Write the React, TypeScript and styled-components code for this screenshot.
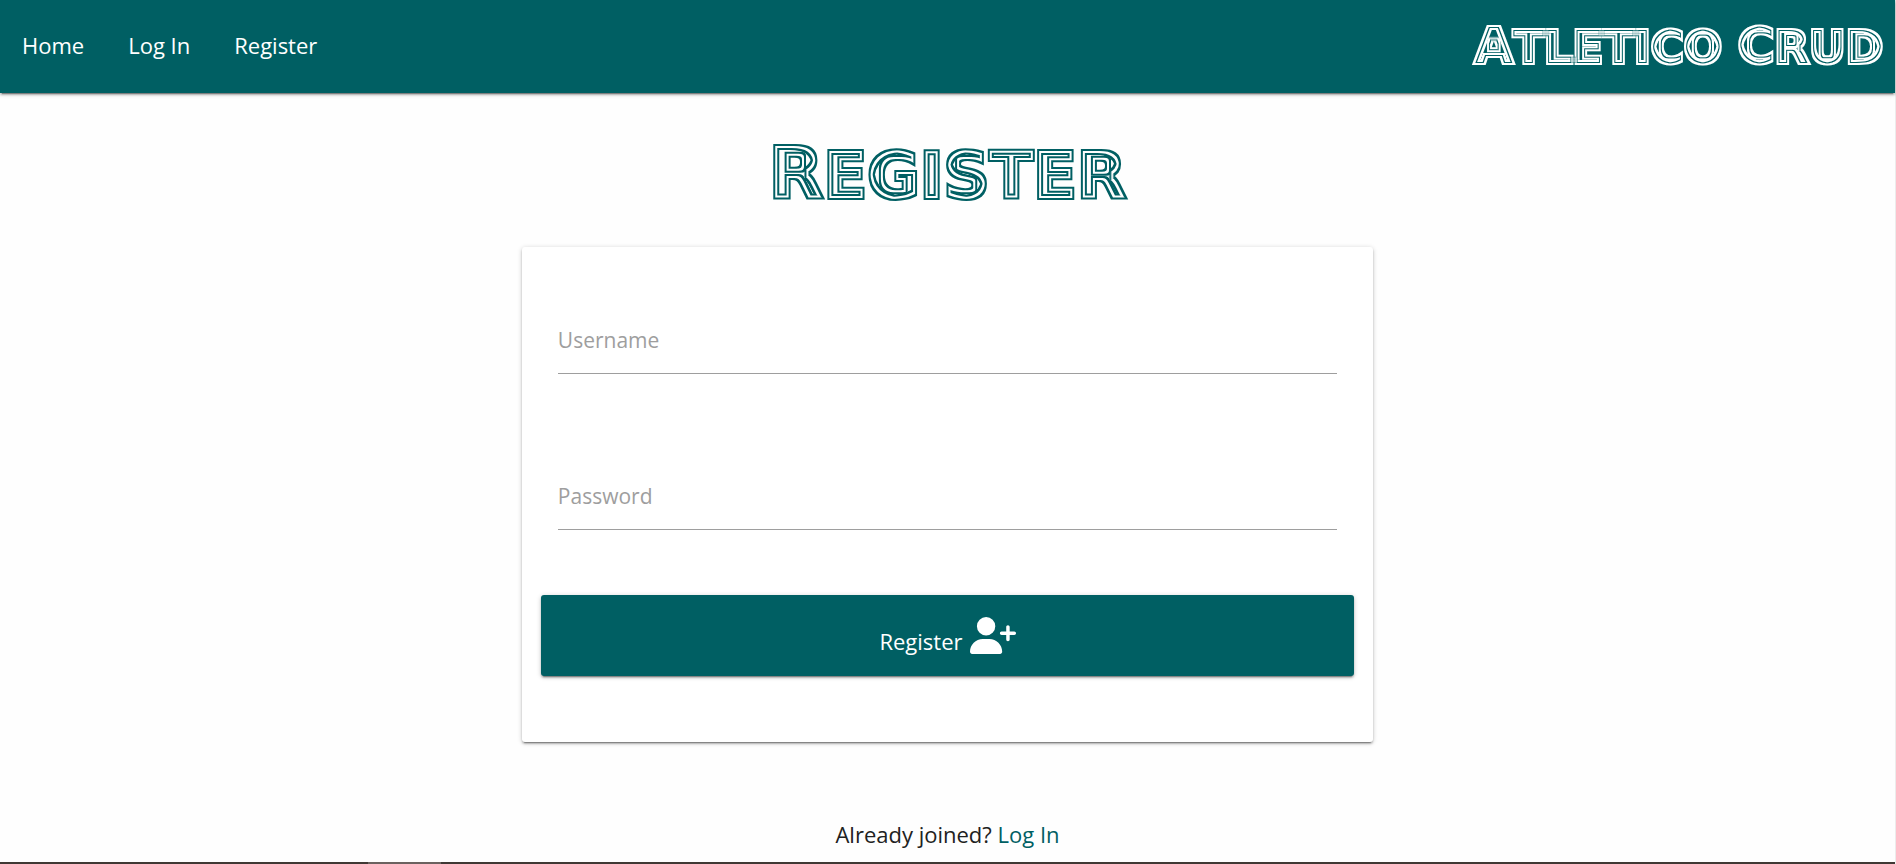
import React from "react";
import styled, { createGlobalStyle } from "styled-components";
import { FaUserPlus } from "react-icons/fa6";

const teal = "#005f63";
const lift = "0 2px 2px 0 rgba(0,0,0,0.2), 0 3px 1px -2px rgba(0,0,0,0.3), 0 1px 5px 0 rgba(0,0,0,0.2)";

const GlobalStyle = createGlobalStyle`
  *, *::before, *::after { box-sizing: border-box; }
  body {
    margin: 0;
    background: #fefefe;
    color: #212121;
    font: 22px/32px "Open Sans", "Noto Sans", sans-serif;
  }
`;

const Page = styled.div`
  min-height: 100vh;
  display: flex;
  flex-direction: column;
  border-right: 1px solid #ececec;
`;

const Nav = styled.nav`
  height: 93px;
  padding-right: 8px;
  display: flex;
  align-items: center;
  justify-content: space-between;
  background: ${teal};
  box-shadow: ${lift};
`;

const NavLinks = styled.div`
  display: flex;
  padding-bottom: 3px;
`;

const NavLink = styled.a`
  padding: 0 22px;
  color: #fff;
  text-decoration: none;
`;

/* Display lettering: capitals engraved with concentric lines. */
const Engraved = styled.span<{ $size: number; $initial: number; $filter: string }>`
  display: inline-block;
  padding: 0 4px;
  font-family: "DejaVu Sans", sans-serif;
  font-weight: 700;
  font-size: ${(p) => p.$size}px;
  line-height: 72px;
  text-transform: uppercase;
  white-space: nowrap;
  -webkit-text-stroke: 4px currentColor;
  filter: url(#${(p) => p.$filter});

  b {
    font-size: ${(p) => p.$initial}px;
  }
`;

const Brand = styled.a`
  color: #fff;
  text-decoration: none;
`;

const Main = styled.main`
  flex: 1;
  display: flex;
  flex-direction: column;
  align-items: center;
`;

const Title = styled.h1`
  margin: 45px 0 37px;
  height: 72px;
  color: ${teal};
  line-height: 72px;
`;

const Card = styled.form`
  width: calc(70% * 2 / 3 - 33px);
  padding: 60px 19px 66px;
  background: #fff;
  border-radius: 3px;
  box-shadow: ${lift};
`;

const Field = styled.div`
  margin: 0 17px 89px;

  & + & {
    margin-bottom: 65px;
  }
`;

const FieldInput = styled.input`
  display: block;
  width: 100%;
  height: 67px;
  padding: 0;
  border: 0;
  border-bottom: 1px solid #9e9e9e;
  background: transparent;
  font: inherit;
  font-size: 21px;
  outline: none;

  &::placeholder {
    color: #9e9e9e;
    opacity: 1;
  }
  &:focus {
    border-color: ${teal};
  }
`;

const SubmitButton = styled.button`
  display: flex;
  align-items: center;
  justify-content: center;
  gap: 7px;
  width: 100%;
  height: 81px;
  padding: 0;
  border: 0;
  border-radius: 3px;
  background: ${teal};
  color: #fff;
  font: inherit;
  box-shadow: ${lift};
  cursor: pointer;

  span {
    padding-top: 10px;
  }
  svg {
    width: 46px;
    height: 37px;
  }
`;

const Joined = styled.p`
  margin: 76px 0 12px;

  a {
    color: ${teal};
    text-decoration: none;
  }
`;

const BottomEdge = styled.footer`
  height: 2px;
  background: linear-gradient(#6b625f, #6b625f) 368px 0 / 73px 2px no-repeat #403834;
`;

const FilterDefs = styled.svg`
  position: absolute;
  width: 0;
  height: 0;
`;

/* Keeps the outer rim and one inner ring of each letter stroke. */
function EngraveFilter({ id, radii }: { id: string; radii: [number, number, number] }) {
  return (
    <filter id={id} x="-5%" y="-5%" width="110%" height="110%" colorInterpolationFilters="sRGB">
      <feMorphology in="SourceGraphic" operator="erode" radius={radii[0]} result="a" />
      <feMorphology in="SourceGraphic" operator="erode" radius={radii[1]} result="b" />
      <feMorphology in="SourceGraphic" operator="erode" radius={radii[2]} result="c" />
      <feComposite in="SourceGraphic" in2="a" operator="out" result="rim" />
      <feComposite in="b" in2="c" operator="out" result="ring" />
      <feMerge>
        <feMergeNode in="rim" />
        <feMergeNode in="ring" />
      </feMerge>
    </filter>
  );
}

export default function App() {
  return (
    <>
      <GlobalStyle />
      <FilterDefs aria-hidden="true">
        <EngraveFilter id="engrave-small" radii={[2, 3, 5]} />
        <EngraveFilter id="engrave-large" radii={[2, 4, 6]} />
      </FilterDefs>
      <Page>
        <Nav>
          <NavLinks>
            <NavLink href="#home">Home</NavLink>
            <NavLink href="#login">Log In</NavLink>
            <NavLink href="#register">Register</NavLink>
          </NavLinks>
          <Brand href="#home">
            <Engraved $size={45} $initial={50} $filter="engrave-small">
              <b>A</b>tletico <b>C</b>rud
            </Engraved>
          </Brand>
        </Nav>
        <Main>
          <Title>
            <Engraved $size={64} $initial={71} $filter="engrave-large">
              <b>R</b>egister
            </Engraved>
          </Title>
          <Card onSubmit={(e: React.FormEvent) => e.preventDefault()}>
            <Field>
              <FieldInput type="text" name="username" aria-label="Username" placeholder="Username" />
            </Field>
            <Field>
              <FieldInput type="password" name="password" aria-label="Password" placeholder="Password" />
            </Field>
            <SubmitButton type="submit">
              <span>Register</span>
              <FaUserPlus aria-hidden="true" />
            </SubmitButton>
          </Card>
          <Joined>
            Already joined? <a href="#login">Log In</a>
          </Joined>
        </Main>
        <BottomEdge />
      </Page>
    </>
  );
}
